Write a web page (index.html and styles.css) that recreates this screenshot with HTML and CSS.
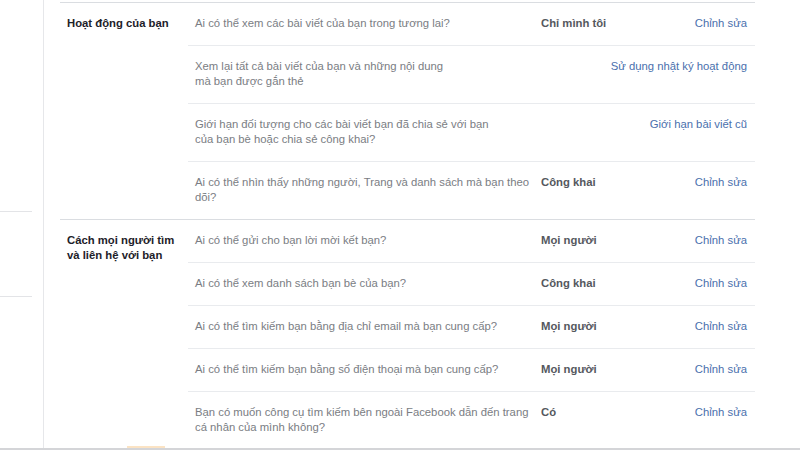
FILE: index.html
```html
<!DOCTYPE html>
<html lang="vi">
<head>
<meta charset="utf-8">
<title>Quyền riêng tư</title>
<link rel="stylesheet" href="styles.css">
</head>
<body>
<div class="page">
  <aside class="sidebar">
    <div class="side-item side-first"></div>
    <div class="side-item"></div>
  </aside>
  <main class="main">
    <section class="section">
      <div class="label">Hoạt động của bạn</div>
      <div class="rows">
        <div class="row">
          <div class="question">Ai có thể xem các bài viết của bạn trong tương lai?</div>
          <div class="value">Chỉ mình tôi</div>
          <a class="link">Chỉnh sửa</a>
        </div>
        <div class="row">
          <div class="question">Xem lại tất cả bài viết của bạn và những nội dung<br>mà bạn được gắn thẻ</div>
          <a class="link">Sử dụng nhật ký hoạt động</a>
        </div>
        <div class="row">
          <div class="question">Giới hạn đối tượng cho các bài viết bạn đã chia sẻ với bạn<br>của bạn bè hoặc chia sẻ công khai?</div>
          <a class="link">Giới hạn bài viết cũ</a>
        </div>
        <div class="row">
          <div class="question">Ai có thể nhìn thấy những người, Trang và danh sách mà bạn theo<br>dõi?</div>
          <div class="value">Công khai</div>
          <a class="link">Chỉnh sửa</a>
        </div>
      </div>
    </section>
    <section class="section">
      <div class="label">Cách mọi người tìm<br>và liên hệ với bạn</div>
      <div class="rows">
        <div class="row">
          <div class="question">Ai có thể gửi cho bạn lời mời kết bạn?</div>
          <div class="value">Mọi người</div>
          <a class="link">Chỉnh sửa</a>
        </div>
        <div class="row">
          <div class="question">Ai có thể xem danh sách bạn bè của bạn?</div>
          <div class="value">Công khai</div>
          <a class="link">Chỉnh sửa</a>
        </div>
        <div class="row">
          <div class="question">Ai có thể tìm kiếm bạn bằng địa chỉ email mà bạn cung cấp?</div>
          <div class="value">Mọi người</div>
          <a class="link">Chỉnh sửa</a>
        </div>
        <div class="row">
          <div class="question">Ai có thể tìm kiếm bạn bằng số điện thoại mà bạn cung cấp?</div>
          <div class="value">Mọi người</div>
          <a class="link">Chỉnh sửa</a>
        </div>
        <div class="row">
          <div class="question">Bạn có muốn công cụ tìm kiếm bên ngoài Facebook dẫn đến trang<br>cá nhân của mình không?</div>
          <div class="value">Có</div>
          <a class="link">Chỉnh sửa</a>
        </div>
      </div>
    </section>
  </main>
</div>
<div class="bottom-bar"><span class="bottom-accent"></span></div>
</body>
</html>
```

FILE: styles.css
```css
html, body {
  margin: 0;
  padding: 0;
  background: #ffffff;
  height: 100%;
  overflow: hidden;
}

body {
  font-family: "Liberation Sans", Arial, Helvetica, sans-serif;
  font-size: 11.3px;
  line-height: 15px;
  color: #1d2129;
}

.page {
  display: flex;
  min-height: 450px;
}

.sidebar {
  width: 43px;
  flex: 0 0 43px;
  border-right: 1px solid #e6e7ea;
  min-height: 450px;
}

.side-item {
  width: 32px;
  height: 84px;
  border-bottom: 1px solid #e3e4e7;
}

.side-first {
  height: 211px;
}

.main {
  margin-left: 16px;
  width: 695px;
  padding-top: 2px;
}

.section {
  display: flex;
  border-top: 1px solid #dadde1;
}

.label {
  width: 121px;
  flex: 0 0 121px;
  padding: 13px 0 0 7px;
  font-weight: bold;
  color: #1d2129;
}

.rows {
  flex: 1;
}

.row {
  display: flex;
  align-items: flex-start;
  padding: 13px 8px 14px 7px;
  border-top: 1px solid #e9ebee;
}

.row:first-child {
  border-top: none;
}

.question {
  width: 346px;
  flex: 0 0 346px;
  color: #7a7d83;
  white-space: nowrap;
}

.value {
  font-weight: bold;
  color: #55585e;
  white-space: nowrap;
}

.link {
  margin-left: auto;
  color: #4a70ad;
  white-space: nowrap;
  cursor: pointer;
}

.bottom-bar {
  position: fixed;
  left: 0;
  right: 0;
  bottom: 0;
  height: 2px;
  background: #d4d5d8;
}

.bottom-accent {
  position: absolute;
  left: 127px;
  top: -2px;
  width: 38px;
  height: 2px;
  background: #fbe3c4;
}
```
